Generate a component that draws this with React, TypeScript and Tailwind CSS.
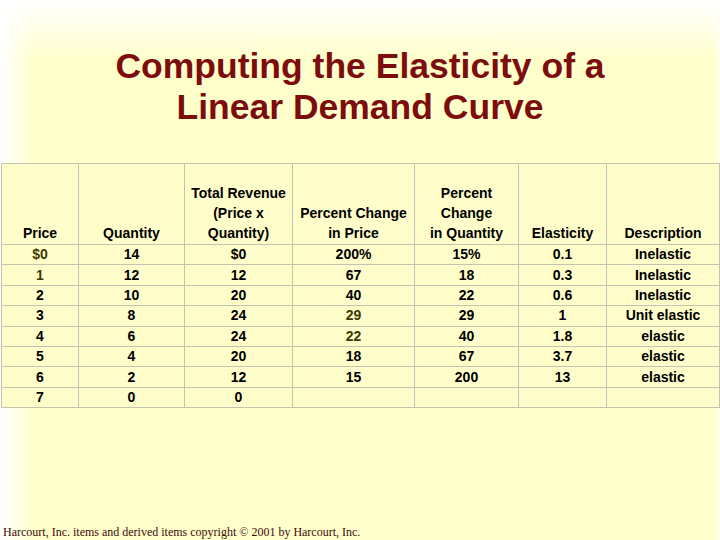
const columns = [
  { width: "w-[77px]", header: ["Price"] },
  { width: "w-[106px]", header: ["Quantity"] },
  { width: "w-[108px]", header: ["Total Revenue", "(Price x", "Quantity)"] },
  { width: "w-[122px]", header: ["Percent Change", "in Price"] },
  { width: "w-[104px]", header: ["Percent", "Change", "in Quantity"] },
  { width: "w-[88px]", header: ["Elasticity"] },
  { width: "w-[113px]", header: ["Description"] },
];

// olive cells are marked with a leading "*"
const rows = [
  ["*$0", "14", "$0", "200%", "15%", "0.1", "Inelastic"],
  ["*1", "12", "12", "67", "18", "0.3", "Inelastic"],
  ["2", "10", "20", "40", "22", "0.6", "Inelastic"],
  ["3", "8", "24", "*29", "29", "1", "Unit elastic"],
  ["4", "6", "24", "*22", "40", "1.8", "elastic"],
  ["5", "4", "20", "18", "67", "3.7", "elastic"],
  ["6", "2", "12", "15", "200", "13", "elastic"],
  ["7", "0", "0", "", "", "", ""],
];

const App = () => {
  return (
    <div className="w-[720px] h-[540px] flex flex-col overflow-hidden bg-[#ffffcc] bg-[linear-gradient(to_bottom,#ffffff_0px,rgba(255,255,255,0)_60px),linear-gradient(to_right,#ffffff_0px,rgba(255,255,255,0)_34px),linear-gradient(to_left,rgba(255,255,255,0.6)_0px,rgba(255,255,255,0)_8px)] font-['Liberation_Sans',Arial,sans-serif]">
      {/* Title */}
      <h1 className="pt-[46px] text-center text-[35.5px] leading-[41px] font-bold text-[#7d0c0c]">
        Computing the Elasticity of a
        <br />
        Linear Demand Curve
      </h1>

      {/* Table */}
      <table className="mt-[35px] ml-[1px] w-[718px] table-fixed border-collapse bg-[#fffecb] text-[14px] font-bold text-black">
        <colgroup>
          {columns.map((c, i) => (
            <col key={i} className={c.width} />
          ))}
        </colgroup>
        <thead>
          <tr className="h-[81px]">
            {columns.map((c, i) => (
              <th key={i} className="border border-[#c4c3b2] align-bottom p-0 pb-[1px] leading-[20px] font-bold">
                {c.header.map((line, j) => (
                  <div key={j}>{line}</div>
                ))}
              </th>
            ))}
          </tr>
        </thead>
        <tbody>
          {rows.map((row, i) => (
            <tr key={i} className="h-[20.4px]">
              {row.map((cell, j) => {
                const olive = cell.startsWith("*");
                return (
                  <td
                    key={j}
                    className={`border border-[#c4c3b2] p-0 text-center leading-[19px] ${olive ? "text-[#3d3a00]" : ""}`}
                  >
                    {olive ? cell.slice(1) : cell}
                  </td>
                );
              })}
            </tr>
          ))}
        </tbody>
      </table>

      {/* Footer */}
      <p className="mt-auto pl-[3px] pb-[1px] text-[12px] leading-[14px] text-[#3f0a0a] font-['Liberation_Serif','Times_New_Roman',serif]">
        Harcourt, Inc. items and derived items copyright © 2001 by Harcourt, Inc.
      </p>
    </div>
  );
};

export default App;
